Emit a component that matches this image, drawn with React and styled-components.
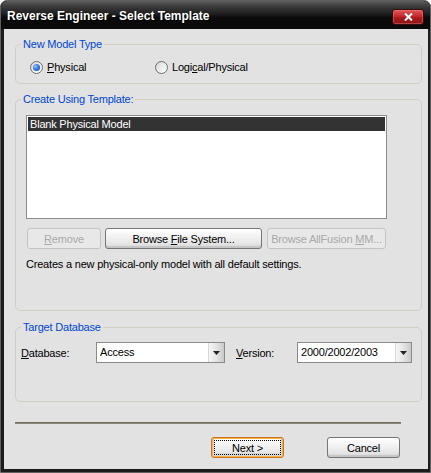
import React from 'react';
import styled, { createGlobalStyle } from 'styled-components';

const GlobalStyle = createGlobalStyle`
  html, body { margin: 0; padding: 0; background: #ffffff; }
  body {
    font-family: "Liberation Sans", Arial, sans-serif;
    font-size: 11px;
    color: #000;
  }
  * { box-sizing: border-box; }
`;

const Window = styled.div`
  width: 431px;
  height: 473px;
  display: flex;
  flex-direction: column;
  background: #1c1c1c;
  border: 1px solid #606060;
  border-radius: 7px 7px 0 0;
  padding: 0 2px 3px 3px;
  overflow: hidden;
`;

const TitleBar = styled.div`
  height: 28px;
  flex: none;
  margin: 0 -2px 0 -3px;
  padding: 7px 6px 0 6px;
  display: flex;
  justify-content: space-between;
  align-items: flex-start;
  background: linear-gradient(#5c5c5c 0%, #3a3a3a 20%, #202020 45%, #0a0a0a 60%, #0a0a0a 100%);
  border-radius: 6px 6px 0 0;
`;

const Title = styled.div`
  font-family: "Liberation Sans", Arial, sans-serif;
  font-weight: bold;
  font-size: 12px;
  line-height: 16px;
  color: #ffffff;
  text-shadow: 1px 1px 0 #000;
`;

const CloseButton = styled.div`
  width: 32px;
  height: 16px;
  margin-top: 1px;
  margin-right: 0px;
  display: flex;
  align-items: center;
  justify-content: center;
  border: 1px solid #3a0b0b;
  border-radius: 3px;
  background: linear-gradient(#e0585a 0%, #c42a2c 45%, #a81a1c 55%, #8e1416 100%);
  box-shadow: inset 0 0 0 1px rgba(255, 150, 150, 0.35);
`;

const Body = styled.div`
  flex: 1;
  display: flex;
  flex-direction: column;
  background: #e2e2e2;
  padding: 9px 6px 0 11px;
`;

const Group = styled.fieldset`
  margin: ${p => p.$mt || 0}px 0 0 0;
  padding: 0;
  min-width: 0;
  border: 1px solid #cfcfc6;
  border-radius: 5px;
`;

const Legend = styled.legend`
  margin-left: 5px;
  padding: 0 2px;
  color: #0046d5;
  font-size: 11px;
  line-height: 13px;
  letter-spacing: -0.2px;
`;

const GroupContent = styled.div`
  padding: ${p => p.$pad};
`;

const RadioRow = styled.div`
  display: grid;
  grid-template-columns: 125px auto;
  height: 16px;
  align-items: center;
`;

const RadioItem = styled.label`
  display: flex;
  align-items: center;
  gap: 4px;
  font-size: 11px;
  letter-spacing: -0.2px;
  line-height: 13px;
`;

const RadioCircle = styled.span`
  width: 13px;
  height: 13px;
  border-radius: 50%;
  border: 1px solid #6d6d6d;
  background: linear-gradient(135deg, #d4d4d4 0%, #ededed 50%, #ffffff 100%);
  display: flex;
  align-items: center;
  justify-content: center;
  &::after {
    content: "";
    display: ${p => (p.$checked ? 'block' : 'none')};
    width: 7px;
    height: 7px;
    border-radius: 50%;
    background: radial-gradient(circle at 35% 35%, #9cc3ff 0%, #3a78e0 45%, #1848b8 100%);
  }
`;

const ListBox = styled.div`
  width: 361px;
  height: 104px;
  background: #ffffff;
  border: 1px solid #8c8c8c;
  padding: 1px;
`;

const ListRow = styled.div`
  height: 14px;
  line-height: 14px;
  padding-left: 2px;
  font-size: 11px;
  letter-spacing: -0.2px;
  background: ${p => (p.$selected ? '#333333' : 'transparent')};
  color: ${p => (p.$selected ? '#ffffff' : '#000000')};
`;

const ButtonRow = styled.div`
  display: flex;
  margin-top: 9px;
  margin-left: 1px;
`;

const Button = styled.button`
  width: ${p => p.$w}px;
  height: 21px;
  margin: 0 0 0 ${p => p.$ml || 0}px;
  padding: 0;
  font-family: "Liberation Sans", Arial, sans-serif;
  font-size: 11px;
  letter-spacing: -0.2px;
  color: #000;
  border: 1px solid #767676;
  border-radius: 3px;
  background: linear-gradient(#ffffff 0%, #f4f4f4 35%, #e6e6e6 75%, #d6d6d6 100%);
  box-shadow: inset 0 -2px 0 #c6c6c6, inset 0 1px 0 #ffffff;
  cursor: default;

  &:disabled {
    color: #a8a8a8;
    border-color: #c4c4c4;
    background: #e8e8e8;
    box-shadow: none;
  }
`;

const FocusButton = styled(Button)`
  border-color: #c9731f;
  box-shadow: inset 0 0 0 1px #f8b34b, inset 0 -2px 0 2px #d6d6d6;
  position: relative;
  &::after {
    content: "";
    position: absolute;
    inset: 2px;
    border: 1px dotted #000;
  }
`;

const Description = styled.div`
  margin-top: 9px;
  line-height: 13px;
  font-size: 11px;
  letter-spacing: -0.2px;
`;

const FieldRow = styled.div`
  display: flex;
  align-items: center;
  height: 21px;
`;

const FieldLabel = styled.span`
  width: ${p => p.$w}px;
  margin-left: ${p => p.$ml || 0}px;
  font-size: 11px;
  letter-spacing: -0.2px;
`;

const Combo = styled.div`
  width: ${p => p.$w}px;
  height: 21px;
  display: flex;
  background: #ffffff;
  border: 1px solid #8a8a8a;
`;

const ComboText = styled.div`
  flex: 1;
  padding-left: 3px;
  line-height: 19px;
  font-size: 11px;
  letter-spacing: -0.2px;
`;

const ComboButton = styled.div`
  width: 16px;
  display: flex;
  align-items: center;
  justify-content: center;
  border-left: 1px solid #d8d8d8;
  background: linear-gradient(90deg, #f6f6f6 0%, #e4e4e4 50%, #c9c9c9 100%);
`;

const Separator = styled.div`
  margin-top: 20px;
  margin-right: 21px;
  height: 2px;
  border-top: 1px solid #716e64;
  border-bottom: 1px solid #8a877d;
`;

const Footer = styled.div`
  display: flex;
  justify-content: flex-end;
  margin-top: 13px;
  margin-right: 22px;
`;

const Arrow = () => (
  <svg width="7" height="4" viewBox="0 0 7 4">
    <polygon points="0,0 7,0 3.5,4" fill="#222" />
  </svg>
);

export default function App() {
  return (
    <>
      <GlobalStyle />
      <Window>
        <TitleBar>
          <Title>Reverse Engineer - Select Template</Title>
          <CloseButton>
            <svg width="9" height="8" viewBox="0 0 9 8">
              <path d="M1 0.5 L8 7.5 M8 0.5 L1 7.5" stroke="#fff" strokeWidth="2" />
            </svg>
          </CloseButton>
        </TitleBar>
        <Body>
          <Group>
            <Legend>New Model Type</Legend>
            <GroupContent $pad="8px 0 8px 14px">
              <RadioRow>
                <RadioItem>
                  <RadioCircle $checked />
                  <span><u>P</u>hysical</span>
                </RadioItem>
                <RadioItem>
                  <RadioCircle />
                  <span>Logi<u>c</u>al/Physical</span>
                </RadioItem>
              </RadioRow>
            </GroupContent>
          </Group>

          <Group $mt={9}>
            <Legend>Create Using Template:</Legend>
            <GroupContent $pad="9px 0 39px 10px">
              <ListBox>
                <ListRow $selected>Blank Physical Model</ListRow>
              </ListBox>
              <ButtonRow>
                <Button $w={74} disabled><u>R</u>emove</Button>
                <Button $w={157} $ml={4}>Browse <u>F</u>ile System...</Button>
                <Button $w={119} $ml={5} disabled>Browse AllFusion <u>M</u>M...</Button>
              </ButtonRow>
              <Description>Creates a new physical-only model with all default settings.</Description>
            </GroupContent>
          </Group>

          <Group $mt={10}>
            <Legend>Target Database</Legend>
            <GroupContent $pad="8px 0 38px 5px">
              <FieldRow>
                <FieldLabel $w={75}><u>D</u>atabase:</FieldLabel>
                <Combo $w={129}>
                  <ComboText>Access</ComboText>
                  <ComboButton><Arrow /></ComboButton>
                </Combo>
                <FieldLabel $w={61} $ml={11}><u>V</u>ersion:</FieldLabel>
                <Combo $w={115}>
                  <ComboText>2000/2002/2003</ComboText>
                  <ComboButton><Arrow /></ComboButton>
                </Combo>
              </FieldRow>
            </GroupContent>
          </Group>

          <Separator />
          <Footer>
            <FocusButton $w={73}>Next &gt;</FocusButton>
            <Button $w={73} $ml={43}>Cancel</Button>
          </Footer>
        </Body>
      </Window>
    </>
  );
}
